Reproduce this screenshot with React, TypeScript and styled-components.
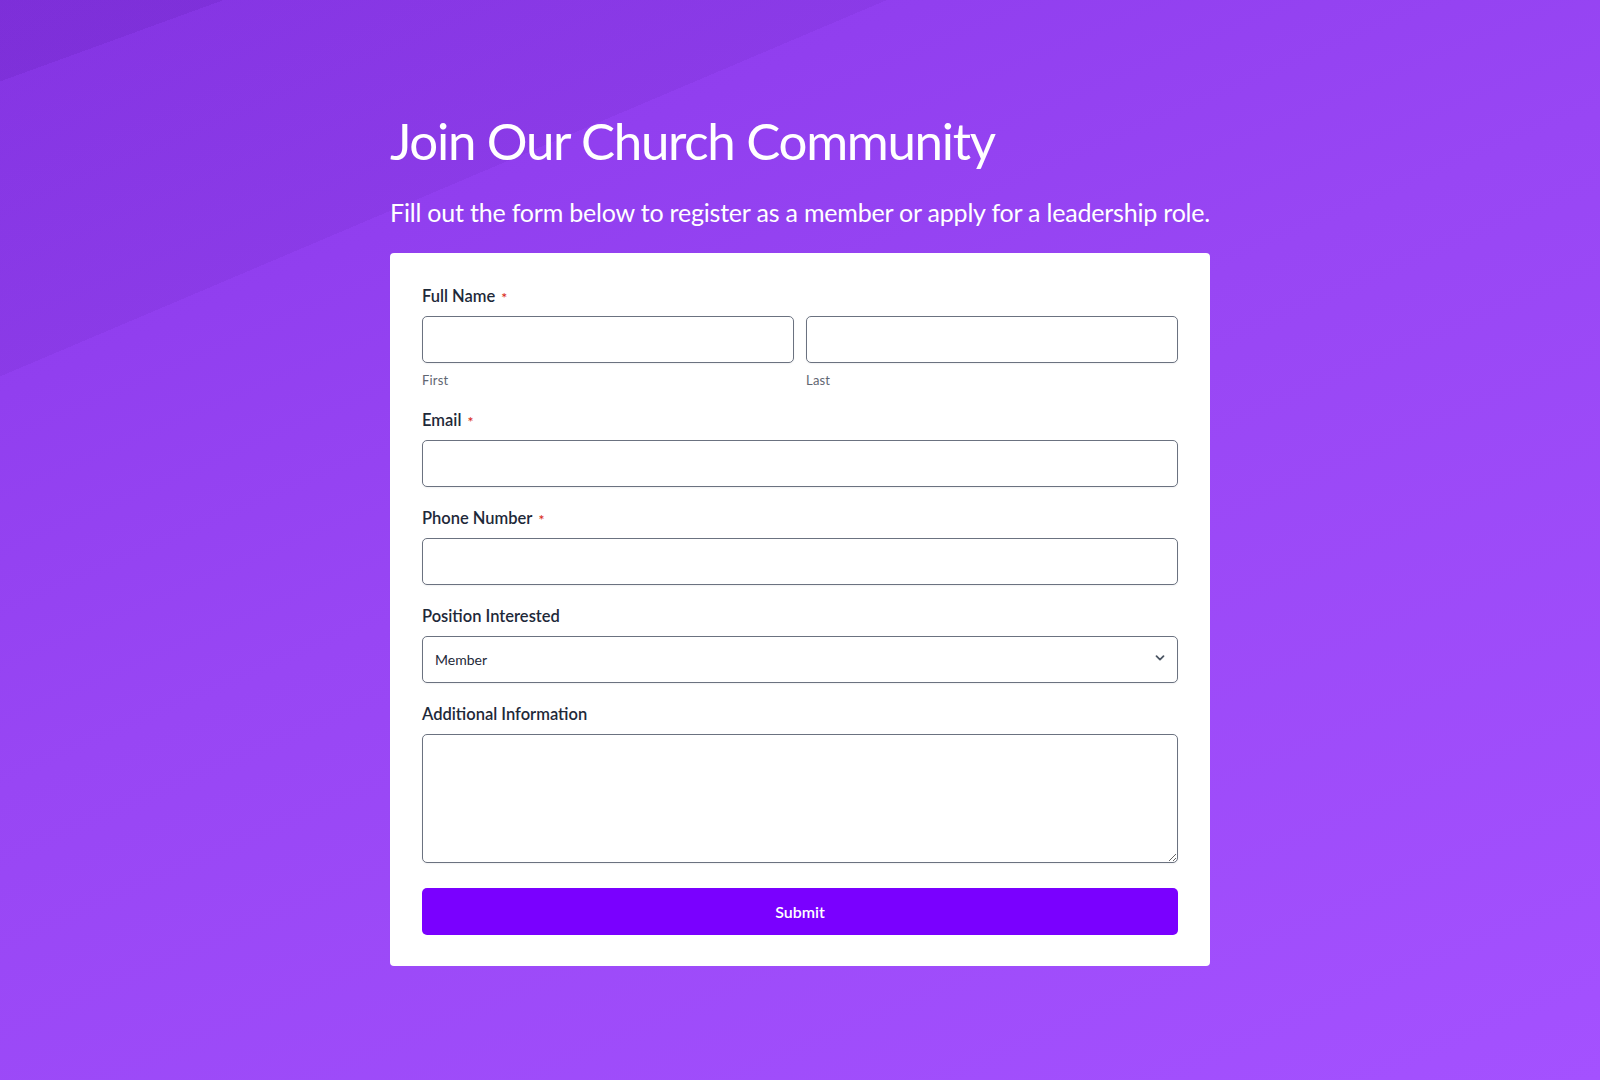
import styled, { createGlobalStyle } from 'styled-components'

const GlobalStyle = createGlobalStyle`
	* {
		box-sizing: border-box;
	}
	body {
		margin: 0;
		font-family: Lato, 'Noto Sans', sans-serif;
	}
`

const Page = styled.main`
	min-height: 1080px;
	padding-top: 110px;
	background:
		linear-gradient(160deg, rgba(60, 0, 130, 0.1) 0 4.9%, transparent 4.9%),
		linear-gradient(157deg, rgba(60, 0, 130, 0.07) 0 21.4%, transparent 21.4%),
		linear-gradient(157deg, #8a38ea 0%, #9846f4 45%, #a451ff 100%);
`

const Wrapper = styled.div`
	width: 820px;
	margin: 0 auto;
`

const Title = styled.h1`
	margin: 0;
	font-size: 51px;
	line-height: 62px;
	font-weight: 400;
	color: #fff;
	letter-spacing: -1.3px;
`

const Subtitle = styled.p`
	margin: 24px 0 25px;
	font-size: 25px;
	line-height: 32px;
	font-weight: 400;
	color: #fff;
	white-space: nowrap;
	letter-spacing: -0.2px;
`

const Card = styled.form`
	background: #fff;
	border-radius: 4px;
	padding: 32px 32px 31px;
`

const Field = styled.div`
	margin-bottom: 20px;
`

const Label = styled.label`
	display: flex;
	align-items: center;
	font-size: 16.5px;
	line-height: 22px;
	font-weight: 600;
	color: #1e2939;
	margin-bottom: 9px;
`

const Required = styled.span`
	color: #d92d20;
	font-size: 14px;
	line-height: 1;
	margin-left: 6px;
	margin-top: 3px;
`

const Row = styled.div`
	display: grid;
	grid-template-columns: 1fr 1fr;
	gap: 12px;
`

const Input = styled.input`
	display: block;
	width: 100%;
	height: 47px;
	border: 1px solid #6b7280;
	border-radius: 5px;
	padding: 0 12px;
	font: inherit;
	font-size: 14px;
	background: #fff;
	box-shadow: 0 1px 2px rgba(16, 24, 40, 0.06);
`

const SubLabel = styled.span`
	display: block;
	margin-top: 8px;
	font-size: 13px;
	line-height: 18px;
	color: #5f6672;
	letter-spacing: 0.2px;
`

const SelectBox = styled.div`
	position: relative;
	svg {
		position: absolute;
		right: 12px;
		top: 16px;
		pointer-events: none;
	}
`

const Select = styled.select`
	display: block;
	width: 100%;
	height: 47px;
	appearance: none;
	border: 1px solid #6b7280;
	border-radius: 5px;
	padding: 0 12px;
	font: inherit;
	font-size: 14px;
	color: #1e2939;
	background: #fff;
	box-shadow: 0 1px 2px rgba(16, 24, 40, 0.06);
`

const TextArea = styled.textarea`
	display: block;
	width: 100%;
	height: 129px;
	border: 1px solid #6b7280;
	border-radius: 5px;
	padding: 10px 12px;
	font: inherit;
	font-size: 14px;
	box-shadow: 0 1px 2px rgba(16, 24, 40, 0.06);
`

const SubmitButton = styled.button`
	display: block;
	width: 100%;
	height: 47px;
	margin-top: 25px;
	border: none;
	border-radius: 5px;
	background: #7a00ff;
	color: #fff;
	font: inherit;
	font-size: 16px;
	font-weight: 600;
	cursor: pointer;
`

const App = () => {
	return (
		<>
			<GlobalStyle />
			<Page>
				<Wrapper>
					<Title>Join Our Church Community</Title>
					<Subtitle>Fill out the form below to register as a member or apply for a leadership role.</Subtitle>
					<Card onSubmit={(e) => e.preventDefault()}>
						<Field>
							<Label>
								Full Name<Required>*</Required>
							</Label>
							<Row>
								<div>
									<Input type={'text'} />
									<SubLabel>First</SubLabel>
								</div>
								<div>
									<Input type={'text'} />
									<SubLabel>Last</SubLabel>
								</div>
							</Row>
						</Field>
						<Field>
							<Label>
								Email<Required>*</Required>
							</Label>
							<Input type={'email'} />
						</Field>
						<Field>
							<Label>
								Phone Number<Required>*</Required>
							</Label>
							<Input type={'tel'} />
						</Field>
						<Field>
							<Label>Position Interested</Label>
							<SelectBox>
								<Select defaultValue={'member'}>
									<option value={'member'}>Member</option>
									<option value={'leader'}>Leader</option>
								</Select>
								<svg width={12} height={12} viewBox={'0 0 12 12'} fill={'none'}>
									<path d={'M2.5 4.2 6 7.6l3.5-3.4'} stroke={'#4b5563'} strokeWidth={1.8} strokeLinecap={'round'} strokeLinejoin={'round'} />
								</svg>
							</SelectBox>
						</Field>
						<Field>
							<Label>Additional Information</Label>
							<TextArea />
						</Field>
						<SubmitButton type={'submit'}>Submit</SubmitButton>
					</Card>
				</Wrapper>
			</Page>
		</>
	)
}

export default App
